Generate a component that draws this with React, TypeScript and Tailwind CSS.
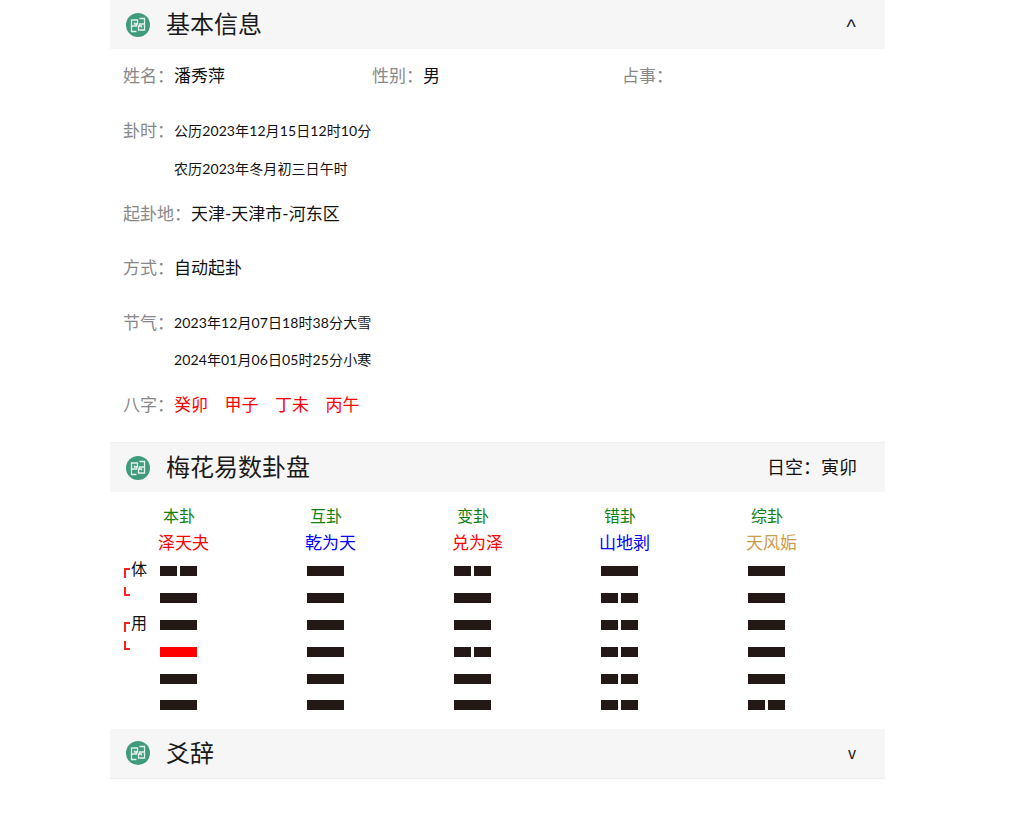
import React from "react";

const FONT = 'Lato, "Noto Sans CJK SC", "Noto Sans", sans-serif';

function Logo() {
  return (
    <svg width="24" height="24" viewBox="0 0 24 24" className="shrink-0">
      <circle cx="12" cy="12" r="12" fill="#3f9b7c" />
      <g fill="none" stroke="#e6f2ee" strokeWidth="1.3">
        {[0, 180].map((r) => (
          <g key={r} transform={`rotate(${r} 12 12)`}>
            <path d="M5.5 12.5V7H11.5V11H8.5V9.5" />
            <path d="M13.5 5.5H18.5V11H13.5V14" />
          </g>
        ))}
      </g>
    </svg>
  );
}

function Header({ title, right }: { title: string; right: React.ReactNode }) {
  return (
    <div className="flex h-[49px] items-center bg-[#f6f6f6] pl-[16px]">
      <Logo />
      <div className="ml-[16px] flex-1 pb-[1px] text-[24px] leading-[32px] text-[#1a1a1a]">{title}</div>
      {right}
    </div>
  );
}

function Label({ children }: { children: React.ReactNode }) {
  return <span className="text-[17px] text-[#888888]">{children}</span>;
}

function Yao({ yin, red }: { yin?: boolean; red?: boolean }) {
  const c = red ? "bg-[#ff0000]" : "bg-[#231815]";
  return (
    <div className="flex h-[26.8px] items-center">
      {yin ? (
        <div className="flex w-[37px] justify-between">
          <div className={`h-[10px] w-[17px] ${c}`} />
          <div className={`h-[10px] w-[17px] ${c}`} />
        </div>
      ) : (
        <div className={`h-[10px] w-[37px] ${c}`} />
      )}
    </div>
  );
}

const GUA = [
  { t: "本卦", n: "泽天夬", c: "text-[#ff0000]", y: [1, 0, 0, 0, 0, 0], red: 3 },
  { t: "互卦", n: "乾为天", c: "text-[#0000ff]", y: [0, 0, 0, 0, 0, 0], red: -1 },
  { t: "变卦", n: "兑为泽", c: "text-[#ff0000]", y: [1, 0, 0, 1, 0, 0], red: -1 },
  { t: "错卦", n: "山地剥", c: "text-[#0000ff]", y: [0, 1, 1, 1, 1, 1], red: -1 },
  { t: "综卦", n: "天风姤", c: "text-[#cc9c4c]", y: [0, 0, 0, 0, 0, 1], red: -1 },
];

function Bracket({ label }: { label: string }) {
  return (
    <div className="relative h-[53.6px]">
      <div className="absolute left-[14px] top-[10px] h-[10px] w-[6px] border-l-2 border-t-2 border-[#ff2020]" />
      <div className="absolute left-[14px] top-[29px] h-[9px] w-[6px] border-b-2 border-l-2 border-[#ff2020]" />
      <div className="absolute left-[21px] top-[-1px] text-[16px] leading-[24px] text-[#111111]">{label}</div>
    </div>
  );
}

const V = "text-[17px] text-[#111111]";
const S = "text-[14px] tracking-[0.1px] text-[#111111]";

export default function App() {
  return (
    <div className="min-h-[822px] bg-white" style={{ fontFamily: FONT }}>
      <div className="ml-[110px] w-[775px]">
        <Header
          title="基本信息"
          right={<span className="mr-[29px] pt-[5px] text-[20px] leading-none text-[#222222] [font-family:'Liberation_Sans']">^</span>}
        />
        <div className="pl-[13px]">
          <div className="flex h-[53px] items-center">
            <div className="w-[249px]">
              <Label>姓名：</Label>
              <span className={V}>潘秀萍</span>
            </div>
            <div className="w-[250px]">
              <Label>性别：</Label>
              <span className={V}>男</span>
            </div>
            <Label>占事：</Label>
          </div>
          <div className="mt-[8px] flex h-[41px] items-center">
            <div className="w-[51px]"><Label>卦时：</Label></div>
            <span className={S}>公历2023年12月15日12时10分</span>
          </div>
          <div className={`flex h-[35px] items-center pl-[51px] ${S}`}>农历2023年冬月初三日午时</div>
          <div className="flex h-[56px] items-center">
            <Label>起卦地：</Label>
            <span className={V}>天津-天津市-河东区</span>
          </div>
          <div className="flex h-[51px] items-center">
            <div className="w-[51px]"><Label>方式：</Label></div>
            <span className={V}>自动起卦</span>
          </div>
          <div className="flex h-[59px] items-center">
            <div className="w-[51px]"><Label>节气：</Label></div>
            <span className={S}>2023年12月07日18时38分大雪</span>
          </div>
          <div className={`flex h-[14px] items-center pl-[51px] ${S}`}>2024年01月06日05时25分小寒</div>
          <div className="mb-[19px] mt-[21px] flex h-[36px] items-center">
            <div className="w-[51px]"><Label>八字：</Label></div>
            <div className="flex gap-[16.5px] text-[17px] text-[#ff0000]">
              <span>癸卯</span>
              <span>甲子</span>
              <span>丁未</span>
              <span>丙午</span>
            </div>
          </div>
        </div>
        <div className="h-[1px] bg-[#eeeeee]" />
        <Header
          title="梅花易数卦盘"
          right={<span className="mr-[28px] text-[18px] text-[#111111]">日空：寅卯</span>}
        />
        <div className="flex pt-[11px]">
          <div className="w-[50px] shrink-0 pt-[55px]">
            <Bracket label="体" />
            <Bracket label="用" />
          </div>
          {GUA.map((g) => (
            <div key={g.t} className="w-[147px] shrink-0">
              <div className="ml-[3px] text-[16px] leading-[26px] text-[#108010]">{g.t}</div>
              <div className={`mb-[2px] ml-[-2px] mt-[1px] text-[17px] leading-[26px] ${g.c}`}>{g.n}</div>
              {g.y.map((v, i) => (
                <Yao key={i} yin={v === 1} red={g.red === i} />
              ))}
            </div>
          ))}
        </div>
        <div className="mt-[10px]" />
        <Header
          title="爻辞"
          right={<span className="mr-[29px] pt-[2px] text-[16px] leading-none text-[#222222] [font-family:'Liberation_Sans']">v</span>}
        />
        <div className="h-[1px] bg-[#eeeeee]" />
      </div>
    </div>
  );
}
